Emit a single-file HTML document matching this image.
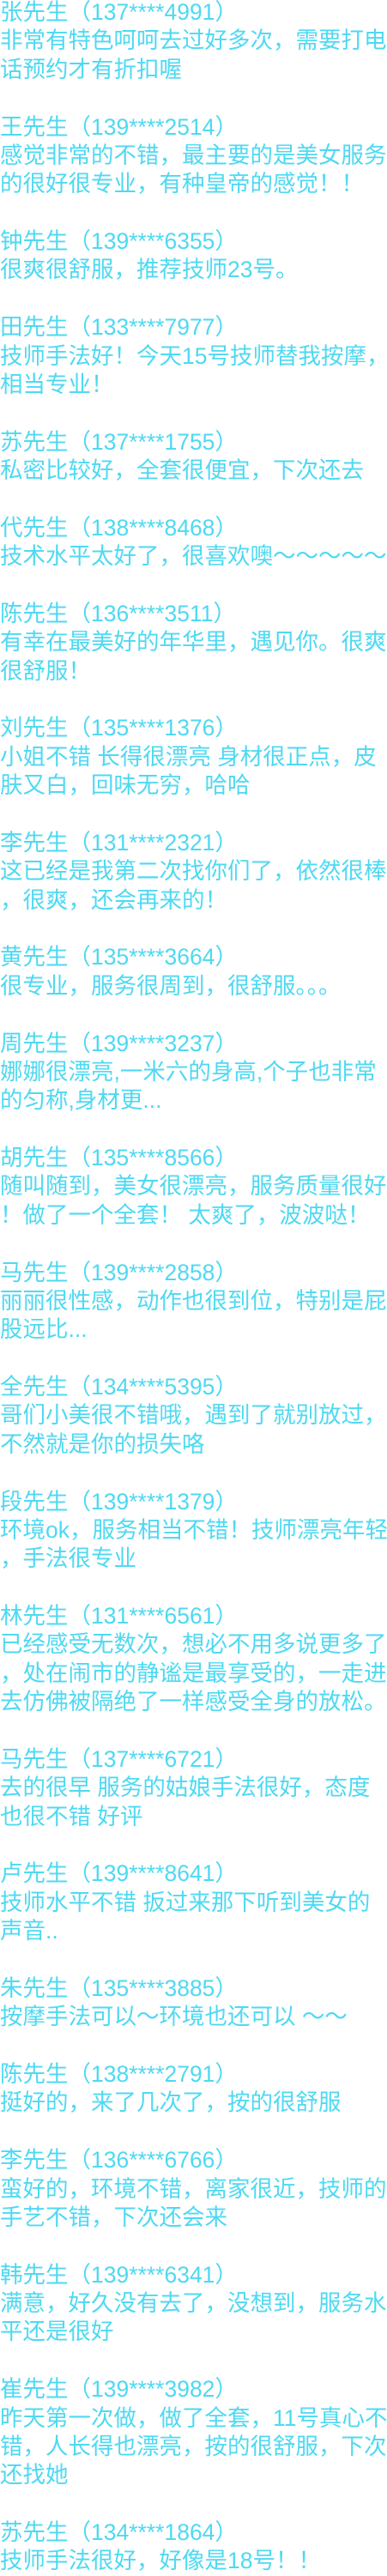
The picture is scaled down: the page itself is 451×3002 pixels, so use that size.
<!DOCTYPE html>
<html><head><meta charset="utf-8"><style>
html,body{margin:0;padding:0;background:#fff;width:451px;height:2996px;overflow:hidden}
body{font-family:"Liberation Sans","Noto Sans CJK SC",sans-serif;font-size:26.5px;line-height:33.37px;color:#4ed9f2}
.w{position:absolute;left:0;top:-2px;white-space:nowrap}
</style></head><body><div class="w">
张先生（137****4991）<br>非常有特色呵呵去过好多次，需要打电<br>话预约才有折扣喔<br><br>
王先生（139****2514）<br>感觉非常的不错，最主要的是美女服务<br>的很好很专业，有种皇帝的感觉！！<br><br>
钟先生（139****6355）<br>很爽很舒服，推荐技师23号。<br><br>
田先生（133****7977）<br>技师手法好！今天15号技师替我按摩，<br>相当专业！<br><br>
苏先生（137****1755）<br>私密比较好，全套很便宜，下次还去<br><br>
代先生（138****8468）<br>技术水平太好了，很喜欢噢～～～～～<br><br>
陈先生（136****3511）<br>有幸在最美好的年华里，遇见你。很爽<br>很舒服！<br><br>
刘先生（135****1376）<br>小姐不错 长得很漂亮 身材很正点，皮<br>肤又白，回味无穷，哈哈<br><br>
李先生（131****2321）<br>这已经是我第二次找你们了，依然很棒<br>，很爽，还会再来的！<br><br>
黄先生（135****3664）<br>很专业，服务很周到，很舒服。。。<br><br>
周先生（139****3237）<br>娜娜很漂亮,一米六的身高,个子也非常<br>的匀称,身材更...<br><br>
胡先生（135****8566）<br>随叫随到，美女很漂亮，服务质量很好<br>！做了一个全套！ 太爽了，波波哒！<br><br>
马先生（139****2858）<br>丽丽很性感，动作也很到位，特别是屁<br>股远比...<br><br>
全先生（134****5395）<br>哥们小美很不错哦，遇到了就别放过，<br>不然就是你的损失咯<br><br>
段先生（139****1379）<br>环境ok，服务相当不错！技师漂亮年轻<br>，手法很专业<br><br>
林先生（131****6561）<br>已经感受无数次，想必不用多说更多了<br>，处在闹市的静谧是最享受的，一走进<br>去仿佛被隔绝了一样感受全身的放松。<br><br>
马先生（137****6721）<br>去的很早 服务的姑娘手法很好，态度<br>也很不错 好评<br><br>
卢先生（139****8641）<br>技师水平不错 扳过来那下听到美女的<br>声音..<br><br>
朱先生（135****3885）<br>按摩手法可以～环境也还可以 ～～<br><br>
陈先生（138****2791）<br>挺好的，来了几次了，按的很舒服<br><br>
李先生（136****6766）<br>蛮好的，环境不错，离家很近，技师的<br>手艺不错，下次还会来<br><br>
韩先生（139****6341）<br>满意，好久没有去了，没想到，服务水<br>平还是很好<br><br>
崔先生（139****3982）<br>昨天第一次做，做了全套，11号真心不<br>错，人长得也漂亮，按的很舒服，下次<br>还找她<br><br>
苏先生（134****1864）<br>技师手法很好，好像是18号！！
</div></body></html>
